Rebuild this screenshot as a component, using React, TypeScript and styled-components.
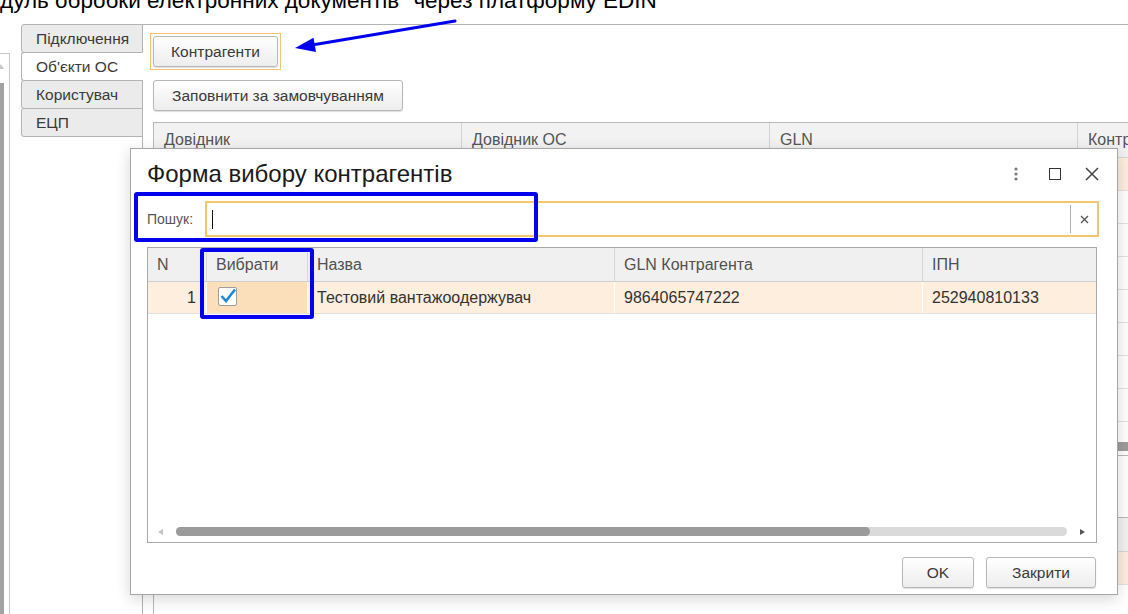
import React from "react";
import styled, { createGlobalStyle } from "styled-components";

const GlobalStyle = createGlobalStyle`
  html, body { margin: 0; padding: 0; background: #fff; }
  body { font-family: "Liberation Sans", Arial, sans-serif; color: #333; overflow: hidden; }
  *, *::before, *::after { box-sizing: border-box; }
`;

const Page = styled.div`
  position: relative;
  width: 1128px;
  height: 614px;
  overflow: hidden;
  background: #fff;
  display: flex;
  flex-direction: column;
`;

const TitleStrip = styled.div`
  height: 24px;
  flex: none;
  overflow: hidden;
`;

const TitleText = styled.div`
  font-size: 22.5px;
  line-height: 22.5px;
  margin-top: -10px;
  margin-left: -31px;
  white-space: nowrap;
  color: #000;
`;

const Body = styled.div`
  flex: 1;
  display: flex;
  min-height: 0;
`;

const LeftRail = styled.div`
  position: relative;
  width: 10px;
  flex: none;
  margin-top: 29px;
  border-top: 1px solid #c6c6c6;
  border-right: 1px solid #c6c6c6;
`;

const RailArrow = styled.div`
  margin-top: 10px;
  width: 0;
  height: 0;
  border-left: 3px solid transparent;
  border-right: 3px solid transparent;
  border-bottom: 5px solid #c9c9c9;
  margin-left: -2px;
`;

const RailThumb = styled.div`
  margin-top: 14px;
  width: 4px;
  height: 600px;
  background: #a2a2a2;
`;

const TabColumn = styled.div`
  width: 122px;
  flex: none;
  margin-left: 11px;
  margin-right: -1px;
  display: flex;
  flex-direction: column;
  position: relative;
  z-index: 1;
`;

const Tab = styled.div<{ $active?: boolean }>`
  height: 29px;
  display: flex;
  align-items: center;
  padding-left: 14px;
  font-size: 15.5px;
  color: #3a3a3a;
  background: ${(p) => (p.$active ? "#fff" : "#ebebeb")};
  border: 1px solid #b3b3b3;
  border-right-color: ${(p) => (p.$active ? "#fff" : "#b3b3b3")};
  border-radius: 3px 0 0 3px;
  & + & {
    margin-top: -1px;
  }
`;

const MainPanel = styled.div`
  flex: 1;
  min-width: 0;
  border-left: 1px solid #b3b3b3;
  border-top: 1px solid #b3b3b3;
  padding: 8px 0 0 7px;
  display: flex;
  flex-direction: column;
  align-items: flex-start;
`;

const FocusFrame = styled.div`
  border: 1px solid #f4c273;
  padding: 2px;
`;

const Button = styled.button<{ $w: number }>`
  width: ${(p) => p.$w}px;
  height: 31px;
  padding: 0;
  font-family: inherit;
  font-size: 15.5px;
  color: #3a3a3a;
  background: linear-gradient(#ffffff, #ededed);
  border: 1px solid #b7b7b7;
  border-radius: 3px;
  box-shadow: 0 1px 1px rgba(0, 0, 0, 0.13);
  flex: none;
`;

const SecondButton = styled(Button)`
  margin: 10px 0 0 3px;
`;

const BgTable = styled.div<{ $mt: number; $h: number }>`
  margin: ${(p) => p.$mt}px 0 0 3px;
  width: 1000px;
  height: ${(p) => p.$h}px;
  flex: none;
  border: 1px solid #b8b8b8;
  display: flex;
  flex-direction: column;
  overflow: hidden;
`;

const BgHeader = styled.div<{ $h: number }>`
  display: grid;
  grid-template-columns: 308px 308px 308px 1fr;
  height: ${(p) => p.$h}px;
  flex: none;
  background: #f2f2f2;
  border-bottom: 1px solid #d6d6d6;
`;

const BgHeadCell = styled.div`
  display: flex;
  align-items: center;
  padding-left: 10px;
  font-size: 16px;
  color: #555;
  border-right: 1px solid #d2d2d2;
  white-space: nowrap;
  overflow: hidden;
`;

const BgRow = styled.div<{ $selected?: boolean }>`
  height: 33px;
  flex: none;
  background: ${(p) => (p.$selected ? "#fdeedd" : "#fff")};
  border-bottom: 1px solid #e2e2e2;
`;

const BgRows = styled.div`
  flex: 1;
  overflow: hidden;
  display: flex;
  flex-direction: column;
`;

const BgScroll = styled.div`
  height: 17px;
  flex: none;
  padding: 4px 0 0 24px;
`;

const BgScrollThumb = styled.div`
  width: 1200px;
  height: 9px;
  border-radius: 5px;
  background: #9c9c9c;
`;

/* ---------- Dialog ---------- */

const Dialog = styled.div`
  position: absolute;
  left: 130px;
  top: 148px;
  width: 988px;
  height: 447px;
  background: #fff;
  border: 1px solid #a6a6a6;
  box-shadow: 0 4px 14px rgba(0, 0, 0, 0.16);
  display: flex;
  flex-direction: column;
  padding: 0 20px 0 16px;
  z-index: 5;
`;

const DialogHeader = styled.div`
  height: 49px;
  flex: none;
  display: flex;
  align-items: center;
  margin-right: -2px;
`;

const DialogTitle = styled.div`
  flex: 1;
  font-size: 24px;
  color: #1a1a1a;
  white-space: nowrap;
  padding-top: 1px;
`;

const HeaderIcons = styled.div`
  display: flex;
  align-items: center;
`;

const HeaderIcon = styled.span<{ $gap: number }>`
  display: inline-flex;
  margin-left: ${(p) => p.$gap}px;
`;

const SearchRow = styled.div`
  margin-top: 3px;
  height: 36px;
  flex: none;
  display: flex;
  align-items: center;
`;

const SearchLabel = styled.div`
  width: 58px;
  flex: none;
  font-size: 14px;
  color: #555;
`;

const SearchInput = styled.div`
  flex: 1;
  height: 36px;
  margin-right: -2px;
  border: 2px solid #f5c46f;
  display: flex;
  align-items: center;
  background: #fff;
`;

const Caret = styled.div`
  width: 1px;
  height: 19px;
  margin-left: 5px;
  background: #111;
`;

const Grow = styled.div`
  flex: 1;
`;

const ClearSep = styled.div`
  width: 1px;
  height: 28px;
  background: #b0b0b0;
`;

const ClearBtn = styled.div`
  width: 26px;
  display: flex;
  justify-content: center;
  align-items: center;
`;

const Table = styled.div`
  margin-top: 10px;
  height: 296px;
  flex: none;
  border: 1px solid #a9a9a9;
  display: flex;
  flex-direction: column;
`;

const GridRow = styled.div<{ $header?: boolean }>`
  display: grid;
  grid-template-columns: 59px 101px 307px 308px 1fr;
  height: ${(p) => (p.$header ? 34 : 32)}px;
  flex: none;
  background: ${(p) => (p.$header ? "#f0f0f0" : "#fdeedd")};
  border-bottom: 1px solid ${(p) => (p.$header ? "#cfcfcf" : "#e1e1e1")};
`;

const HeadCell = styled.div`
  display: flex;
  align-items: center;
  padding: 0 9px;
  font-size: 16px;
  color: #505050;
  border-right: 1px solid #d6d6d6;
  white-space: nowrap;
  &:last-child {
    border-right: none;
  }
`;

const Cell = styled.div<{ $align?: "right"; $active?: boolean }>`
  display: flex;
  align-items: center;
  justify-content: ${(p) => (p.$align === "right" ? "flex-end" : "flex-start")};
  padding: ${(p) => (p.$align === "right" ? "0 10px 0 0" : p.$active ? "0 0 0 11px" : "0 9px")};
  font-size: 16px;
  color: #333;
  background: ${(p) => (p.$active ? "#fbdfbb" : "transparent")};
  border-right: 1px solid #fff;
  white-space: nowrap;
  &:last-child {
    border-right: none;
  }
`;

const CheckBox = styled.div`
  width: 19px;
  height: 19px;
  margin-top: -2px;
  border: 1px solid #9d9d9d;
  border-radius: 2px;
  background: #fff;
  display: flex;
`;

const ScrollRow = styled.div`
  height: 9px;
  margin-bottom: 6px;
  flex: none;
  display: flex;
  align-items: center;
`;

const ScrollArrow = styled.div<{ $w: number; $pl: number }>`
  width: ${(p) => p.$w}px;
  padding-left: ${(p) => p.$pl}px;
  display: flex;
  align-items: center;
  flex: none;
`;

const Track = styled.div`
  flex: 1;
  height: 9px;
  border-radius: 5px;
  background: #dadada;
  display: flex;
`;

const Thumb = styled.div<{ $pct: number }>`
  width: ${(p) => p.$pct}%;
  height: 9px;
  border-radius: 5px;
  background: #9b9b9b;
`;

const Footer = styled.div`
  margin-top: 14px;
  display: flex;
  justify-content: flex-end;
  gap: 12px;
  margin-right: 1px;
`;

/* ---------- Annotations ---------- */

const Mark = styled.div<{ $x: number; $y: number; $w: number; $h: number }>`
  position: absolute;
  left: ${(p) => p.$x}px;
  top: ${(p) => p.$y}px;
  width: ${(p) => p.$w}px;
  height: ${(p) => p.$h}px;
  border: 4px solid #0000ee;
  border-radius: 3px;
  z-index: 10;
  pointer-events: none;
`;

const ArrowSvg = styled.svg`
  position: absolute;
  left: 0;
  top: 0;
  z-index: 10;
  pointer-events: none;
`;

export default function App() {
  return (
    <>
      <GlobalStyle />
      <Page>
        <TitleStrip>
          <TitleText>Модуль обробки електронних документів "через платформу EDIN</TitleText>
        </TitleStrip>
        <Body>
          <LeftRail>
            <RailArrow />
            <RailThumb />
          </LeftRail>
          <TabColumn>
            <Tab>Підключення</Tab>
            <Tab $active>Об'єкти ОС</Tab>
            <Tab>Користувач</Tab>
            <Tab>ЕЦП</Tab>
          </TabColumn>
          <MainPanel>
            <FocusFrame>
              <Button $w={125}>Контрагенти</Button>
            </FocusFrame>
            <SecondButton $w={250}>Заповнити за замовчуванням</SecondButton>
            <BgTable $mt={11} $h={334}>
              <BgHeader $h={35}>
                <BgHeadCell>Довідник</BgHeadCell>
                <BgHeadCell>Довідник ОС</BgHeadCell>
                <BgHeadCell>GLN</BgHeadCell>
                <BgHeadCell>Контрагент</BgHeadCell>
              </BgHeader>
              <BgRows>
                <BgRow $selected />
                <BgRow />
                <BgRow />
                <BgRow />
                <BgRow />
                <BgRow />
                <BgRow />
                <BgRow />
              </BgRows>
              <BgScroll>
                <BgScrollThumb />
              </BgScroll>
            </BgTable>
            <BgTable $mt={61} $h={120}>
              <BgHeader $h={34} />
              <BgRows>
                <BgRow $selected />
              </BgRows>
            </BgTable>
          </MainPanel>
        </Body>

        <Dialog>
          <DialogHeader>
            <DialogTitle>Форма вибору контрагентів</DialogTitle>
            <HeaderIcons>
              <HeaderIcon $gap={0}>
                <svg width="4" height="14" viewBox="0 0 4 14">
                  <circle cx="2" cy="2" r="1.6" fill="#7a7a7a" />
                  <circle cx="2" cy="7" r="1.6" fill="#7a7a7a" />
                  <circle cx="2" cy="12" r="1.6" fill="#7a7a7a" />
                </svg>
              </HeaderIcon>
              <HeaderIcon $gap={31}>
                <svg width="12" height="12" viewBox="0 0 12 12">
                  <rect x="0.5" y="0.5" width="11" height="11" fill="none" stroke="#333" strokeWidth="1" />
                </svg>
              </HeaderIcon>
              <HeaderIcon $gap={24}>
                <svg width="14" height="14" viewBox="0 0 14 14">
                  <path d="M1 1 L13 13 M13 1 L1 13" stroke="#444" strokeWidth="1.5" fill="none" />
                </svg>
              </HeaderIcon>
            </HeaderIcons>
          </DialogHeader>

          <SearchRow>
            <SearchLabel>Пошук:</SearchLabel>
            <SearchInput>
              <Caret />
              <Grow />
              <ClearSep />
              <ClearBtn>
                <svg width="9" height="9" viewBox="0 0 9 9">
                  <path d="M1 1 L8 8 M8 1 L1 8" stroke="#555" strokeWidth="1.3" fill="none" />
                </svg>
              </ClearBtn>
            </SearchInput>
          </SearchRow>

          <Table>
            <GridRow $header>
              <HeadCell>N</HeadCell>
              <HeadCell>Вибрати</HeadCell>
              <HeadCell>Назва</HeadCell>
              <HeadCell>GLN Контрагента</HeadCell>
              <HeadCell>ІПН</HeadCell>
            </GridRow>
            <GridRow>
              <Cell $align="right">1</Cell>
              <Cell $active>
                <CheckBox>
                  <svg width="17" height="17" viewBox="0 0 17 17">
                    <path d="M2.5 8 L7 13 L16 1.5" stroke="#1a87d4" strokeWidth="2.6" fill="none" strokeLinejoin="miter" />
                  </svg>
                </CheckBox>
              </Cell>
              <Cell>Тестовий вантажоодержувач</Cell>
              <Cell>9864065747222</Cell>
              <Cell>252940810133</Cell>
            </GridRow>
            <Grow />
            <ScrollRow>
              <ScrollArrow $w={28} $pl={10}>
                <svg width="5" height="6" viewBox="0 0 5 6">
                  <path d="M5 0 L0 3 L5 6 Z" fill="#c2c2c2" />
                </svg>
              </ScrollArrow>
              <Track>
                <Thumb $pct={77.9} />
              </Track>
              <ScrollArrow $w={29} $pl={13}>
                <svg width="5" height="6" viewBox="0 0 5 6">
                  <path d="M0 0 L5 3 L0 6 Z" fill="#555" />
                </svg>
              </ScrollArrow>
            </ScrollRow>
          </Table>

          <Footer>
            <Button $w={72}>OK</Button>
            <Button $w={110}>Закрити</Button>
          </Footer>
        </Dialog>

        <Mark $x={134} $y={192} $w={404} $h={50} />
        <Mark $x={200} $y={248} $w={114} $h={71} />

        <ArrowSvg width="1128" height="80" viewBox="0 0 1128 80">
          <line x1="455" y1="21" x2="312" y2="45" stroke="#0000ee" strokeWidth="3" strokeLinecap="round" />
          <polygon points="295,48 316,52 313.5,37.8" fill="#0000ee" />
        </ArrowSvg>
      </Page>
    </>
  );
}
